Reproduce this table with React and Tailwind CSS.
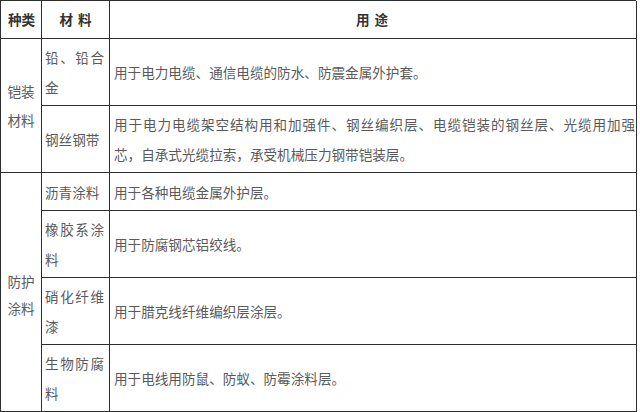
import React from 'react';

const font = { fontFamily: '"Noto Sans CJK SC", "Noto Sans", sans-serif' };

const rows = [
  { mat: ['铅、铅合', '金'], use: ['用于电力电缆、通信电缆的防水、防震金属外护套。'] },
  { mat: ['钢丝钢带'], use: ['用于电力电缆架空结构用和加强件、钢丝编织层、电缆铠装的钢丝层、光缆用加强', '芯，自承式光缆拉索，承受机械压力钢带铠装层。'] },
  { mat: ['沥青涂料'], use: ['用于各种电缆金属外护层。'] },
  { mat: ['橡胶系涂', '料'], use: ['用于防腐钢芯铝绞线。'] },
  { mat: ['硝化纤维', '漆'], use: ['用于腊克线纤维编织层涂层。'] },
  { mat: ['生物防腐', '料'], use: ['用于电线用防鼠、防蚁、防霉涂料层。'] },
];

// wrapped lines are spread to the full width, last line left as is
const Lines = ({ lines }) => (
  <div className="leading-[30px]">
    {lines.map((l, i) => (
      <div
        key={i}
        className={i < lines.length - 1 ? 'text-justify [text-align-last:justify]' : ''}
      >
        {l}
      </div>
    ))}
  </div>
);

const Row = ({ r }) => (
  <>
    <div className="flex items-center border-r border-b border-[#2e2e2e] pl-[3px] pr-[5px]">
      <div className="w-full">
        <Lines lines={r.mat} />
      </div>
    </div>
    <div className="flex items-center border-r border-b border-[#2e2e2e] pl-[4px] pr-[1px]">
      <div className="w-full">
        <Lines lines={r.use} />
      </div>
    </div>
  </>
);

const App = () => {
  return (
    <div className="w-[640px] h-[412px] bg-white overflow-hidden text-[13.6px] text-[#5a5a5a]" style={font}>
      <div className="grid w-[636px] grid-cols-[41px_68px_527px] grid-rows-[38px_67px_67px_38px_67px_67px_67px] border-t border-l border-[#2e2e2e]">
        {/* Header */}
        <div className="flex items-center justify-center border-r border-b border-[#2e2e2e] font-bold text-[#333] pl-[1px]">
          种类
        </div>
        <div className="flex items-center justify-center gap-[5px] border-r border-b border-[#2e2e2e] font-bold text-[#333]">
          <span>材</span>
          <span>料</span>
        </div>
        <div className="flex items-center justify-center gap-[5px] border-r border-b border-[#2e2e2e] font-bold text-[#333] pr-[2px]">
          <span>用</span>
          <span>途</span>
        </div>

        {/* 铠装材料 */}
        <div className="row-span-2 flex items-center justify-center border-r border-b border-[#2e2e2e] text-center leading-[29px]">
          <div>
            铠装
            <br />
            材料
          </div>
        </div>
        {rows.slice(0, 2).map((r, i) => (
          <Row key={i} r={r} />
        ))}

        {/* 防护涂料 */}
        <div className="row-span-4 flex items-center justify-center border-r border-b border-[#2e2e2e] text-center leading-[27px] pt-[6px]">
          <div>
            防护
            <br />
            涂料
          </div>
        </div>
        {rows.slice(2).map((r, i) => (
          <Row key={i} r={r} />
        ))}
      </div>
    </div>
  );
};

export default App;
